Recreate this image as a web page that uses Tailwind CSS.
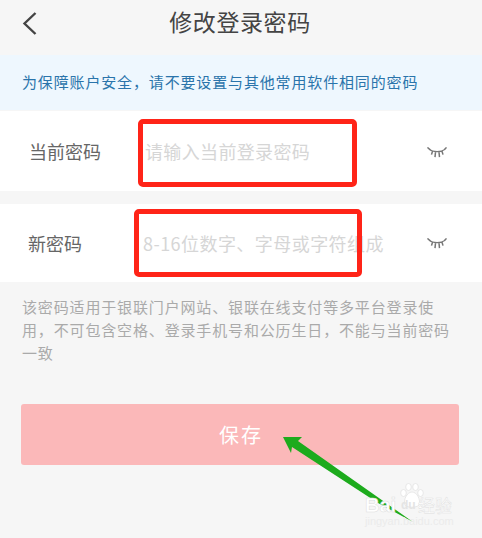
<!DOCTYPE html>
<html lang="zh">
<head>
  <meta charset="UTF-8">
  <title>修改登录密码</title>
  <script src="https://cdn.jsdelivr.net/npm/@tailwindcss/browser@4"></script>
</head>
<body class="bg-[#f6f6f6] font-['Noto_Sans_CJK_SC','Noto_Sans',sans-serif]">
  <div class="relative w-[482px] h-[538px] overflow-hidden">
    <!-- Header -->
    <header class="relative flex items-center justify-center h-[55px] pb-[14px]">
      <svg class="absolute left-[22px] top-[11px]" width="16" height="24" viewBox="0 0 16 24" fill="none" stroke="#444" stroke-width="2.4"><path d="M13.5 2 L2.5 12.5 L13.5 23"/></svg>
      <h1 class="text-[23px] leading-[30px] ml-[-2px] tracking-[0.6px] text-[#444]">修改登录密码</h1>
    </header>

    <!-- Tip -->
    <div class="flex items-center h-[55px] pl-[22px] bg-[#eef7fe] text-[15px] tracking-[0.85px] text-[#2a74ab]">为保障账户安全，请不要设置与其他常用软件相同的密码</div>

    <!-- Form -->
    <div class="flex items-center h-[80px] mt-[1px] bg-white pl-[29px] pr-[35px]">
      <span class="w-[116px] text-[18px] text-[#666]">当前密码</span>
      <span class="flex-1 text-[18px] tracking-[0.35px] text-[#d6d6d6]">请输入当前登录密码</span>
      <svg class="mt-[2px]" width="20" height="11" viewBox="0 0 20 13" preserveAspectRatio="none" fill="none" stroke="#777" stroke-width="1.5"><path d="M2 2.5 C6 6.5 14 6.5 18.5 2.5 M0.5 0.5 L3.5 3.5 M5.5 5 L4.5 9 M8.5 6 L8 12 M12 6 L12.5 12 M15 5 L16 9 M17 3.5 L19.5 0.5"/></svg>
    </div>
    <div class="flex items-center h-[78px] mt-[13px] bg-white pl-[28px] pr-[35px]">
      <span class="w-[115px] text-[18px] text-[#666]">新密码</span>
      <span class="flex-1 text-[18px] tracking-[0.45px] text-[#d6d6d6]">8-16位数字、字母或字符组成</span>
      <svg class="mt-[1px]" width="20" height="11" viewBox="0 0 20 13" preserveAspectRatio="none" fill="none" stroke="#777" stroke-width="1.5"><path d="M2 2.5 C6 6.5 14 6.5 18.5 2.5 M0.5 0.5 L3.5 3.5 M5.5 5 L4.5 9 M8.5 6 L8 12 M12 6 L12.5 12 M15 5 L16 9 M17 3.5 L19.5 0.5"/></svg>
    </div>

    <p class="mt-[13px] px-[22px] w-[479px] text-[15px] leading-[23px] tracking-[0.85px] text-[#aaa]">该密码适用于银联门户网站、银联在线支付等多平台登录使用，不可包含空格、登录手机号和公历生日，不能与当前密码一致</p>

    <button class="flex items-center justify-center mt-[40px] ml-[21px] pl-[2px] w-[438px] h-[61px] rounded-[3px] bg-[#fbb8b9] text-[20px] tracking-[2px] text-white">保存</button>

    <!-- Annotations -->
    <div class="absolute left-[138px] top-[119px] w-[219px] h-[68px] border-[5px] border-[#ff2418] rounded-[5px]"></div>
    <div class="absolute left-[134px] top-[209px] w-[228px] h-[68px] border-[5px] border-[#ff2418] rounded-[5px]"></div>
    <svg class="absolute left-0 top-0" width="482" height="538" viewBox="0 0 482 538"><path d="M283 437 L302 437 L298 441 L413 522 L378 503 L292 447 L291 453 Z" fill="#1dab1d"/></svg>

    <!-- Watermark -->
    <svg class="absolute left-[400px] top-[483px]" width="24" height="26" viewBox="0 0 24 26" fill="#fff" stroke="#e2e2e2" stroke-width="0.8"><ellipse cx="3.5" cy="10" rx="2.8" ry="3.5"/><ellipse cx="8.5" cy="4" rx="2.8" ry="3.5"/><ellipse cx="15.5" cy="4" rx="2.8" ry="3.5"/><ellipse cx="20.5" cy="10" rx="2.8" ry="3.5"/><path d="M12 9 C17 9 21 17 19 22 C16 25 8 25 5 22 C3 17 7 9 12 9 Z"/></svg>
    <div class="absolute left-[365px] top-[496px] flex items-center">
      <span class="w-[36px] text-[20px] leading-[18px] font-bold font-['Liberation_Sans',sans-serif] text-white [-webkit-text-stroke:0.5px_#dedede]">Bai</span>
      <span class="w-[17px] text-[12px] leading-[18px] font-bold font-['Liberation_Sans',sans-serif] text-[#e4e4e4]">du</span>
      <span class="text-[17px] leading-[18px] text-white [-webkit-text-stroke:0.4px_#dedede]">经验</span>
    </div>
    <div class="absolute left-[365px] top-[515px] text-[11px] leading-[12px] font-['Liberation_Sans',sans-serif] text-[#ebebeb]">jingyan.baidu.com</div>
  </div>
</body>
</html>
